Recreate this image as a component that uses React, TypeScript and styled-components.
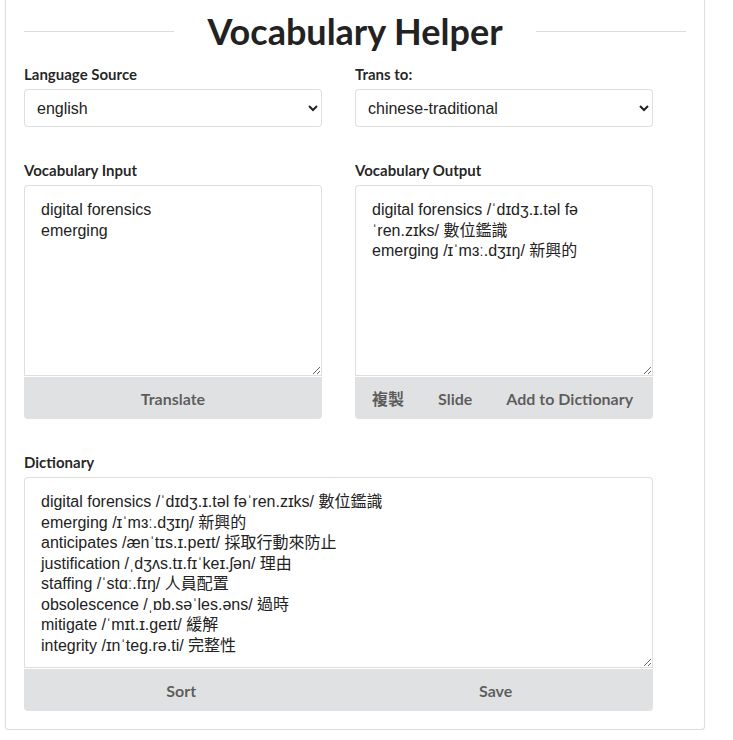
import styled, { createGlobalStyle } from "styled-components";

const GlobalStyle = createGlobalStyle`
    body {
        margin: 0;
        background: #fff;
        font-family: Lato, "Noto Sans CJK TC", sans-serif;
        color: rgba(0, 0, 0, 0.87);
    }
`

const outputText = `digital forensics /ˈdɪdʒ.ɪ.təl fəˈren.zɪks/ 數位鑑識
emerging /ɪˈmɜː.dʒɪŋ/ 新興的`

const dictionaryText = `digital forensics /ˈdɪdʒ.ɪ.təl fəˈren.zɪks/ 數位鑑識
emerging /ɪˈmɜː.dʒɪŋ/ 新興的
anticipates /ænˈtɪs.ɪ.peɪt/ 採取行動來防止
justification /ˌdʒʌs.tɪ.fɪˈkeɪ.ʃən/ 理由
staffing /ˈstɑː.fɪŋ/ 人員配置
obsolescence /ˌɒb.səˈles.əns/ 過時
mitigate /ˈmɪt.ɪ.geɪt/ 緩解
integrity /ɪnˈteg.rə.ti/ 完整性`

export default function App() {
    return (
        <>
            <GlobalStyle />
            <Card>
                <Header>
                    <Line />
                    <Title>Vocabulary Helper</Title>
                    <Line />
                </Header>

                <Row>
                    <Field>
                        <Label>Language Source</Label>
                        <Select defaultValue="english">
                            <option value="english">english</option>
                            <option value="japanese">japanese</option>
                        </Select>
                    </Field>
                    <Field>
                        <Label>Trans to:</Label>
                        <Select defaultValue="chinese-traditional">
                            <option value="chinese-traditional">chinese-traditional</option>
                            <option value="chinese-simplified">chinese-simplified</option>
                        </Select>
                    </Field>
                </Row>

                <Row>
                    <Field>
                        <Label>Vocabulary Input</Label>
                        <TextArea defaultValue={"digital forensics\nemerging"} />
                        <ButtonBar>
                            <Button $grow>Translate</Button>
                        </ButtonBar>
                    </Field>
                    <Field>
                        <Label>Vocabulary Output</Label>
                        <TextArea defaultValue={outputText} />
                        <ButtonBar>
                            <Button>複製</Button>
                            <Button>Slide</Button>
                            <Button>Add to Dictionary</Button>
                        </ButtonBar>
                    </Field>
                </Row>

                <Row $single>
                    <Field $wide>
                        <Label>Dictionary</Label>
                        <TextArea defaultValue={dictionaryText} />
                        <ButtonBar>
                            <Button $grow>Sort</Button>
                            <Button $grow>Save</Button>
                        </ButtonBar>
                    </Field>
                </Row>
            </Card>
        </>
    )
}

const Card = styled.div`
    box-sizing: border-box;
    width: 700px;
    margin: 0 0 0 5px;
    padding: 0 18px 18px 18px;
    border: 1px solid #dedede;
    border-top: none;
    border-radius: 0 0 4px 4px;
    box-shadow: 0 1px 2px rgba(0, 0, 0, 0.06);
`

const Header = styled.div`
    display: flex;
    align-items: center;
    padding-top: 10px;
`

const Line = styled.div`
    flex: 1;
    height: 1px;
    background: #dcdcdc;
`

const Title = styled.h1`
    margin: 0 33px;
    font-size: 36px;
    line-height: 42px;
    font-weight: 700;
    color: #222;
`

const Row = styled.div<{ $single?: boolean }>`
    display: grid;
    grid-template-columns: ${p => (p.$single ? "1fr" : "1fr 1fr")};
    margin-top: 13px;

    & + & {
        margin-top: 34px;
    }
`

const Field = styled.div<{ $wide?: boolean }>`
    display: flex;
    flex-direction: column;
    width: ${p => (p.$wide ? "95%" : "90%")};
`

const Label = styled.label`
    display: block;
    font-size: 15px;
    font-weight: 700;
    line-height: 18px;
    margin-bottom: 6px;
    color: rgba(0, 0, 0, 0.87);
`

const Select = styled.select`
    box-sizing: border-box;
    height: 38px;
    padding: 0 8px;
    border: 1px solid rgba(34, 36, 38, 0.15);
    border-radius: 4px;
    background: #fff;
    font-family: "Liberation Sans", Arial, sans-serif;
    font-size: 16px;
    color: #222;
`

const TextArea = styled.textarea`
    box-sizing: border-box;
    width: 100%;
    height: 191px;
    margin: 0;
    padding: 14px 16px 8px;
    border: 1px solid rgba(34, 36, 38, 0.15);
    border-radius: 4px 4px 0 0;
    font-family: "Liberation Sans", Arial, "Noto Sans CJK TC", sans-serif;
    font-size: 16px;
    line-height: 1.2857;
    color: #222;
    resize: both;
    outline: none;
    display: block;
`

const ButtonBar = styled.div`
    display: flex;
    height: 42px;
    margin-top: 1px;
    background: #e0e1e2;
    border-radius: 0 0 4px 4px;
`

const Button = styled.button<{ $grow?: boolean }>`
    flex: ${p => (p.$grow ? "1" : "none")};
    padding: 0 17px;
    border: none;
    background: transparent;
    font-family: Lato, "Noto Sans CJK TC", sans-serif;
    font-size: 16px;
    font-weight: 700;
    color: rgba(0, 0, 0, 0.6);
    cursor: pointer;
    white-space: nowrap;
`
